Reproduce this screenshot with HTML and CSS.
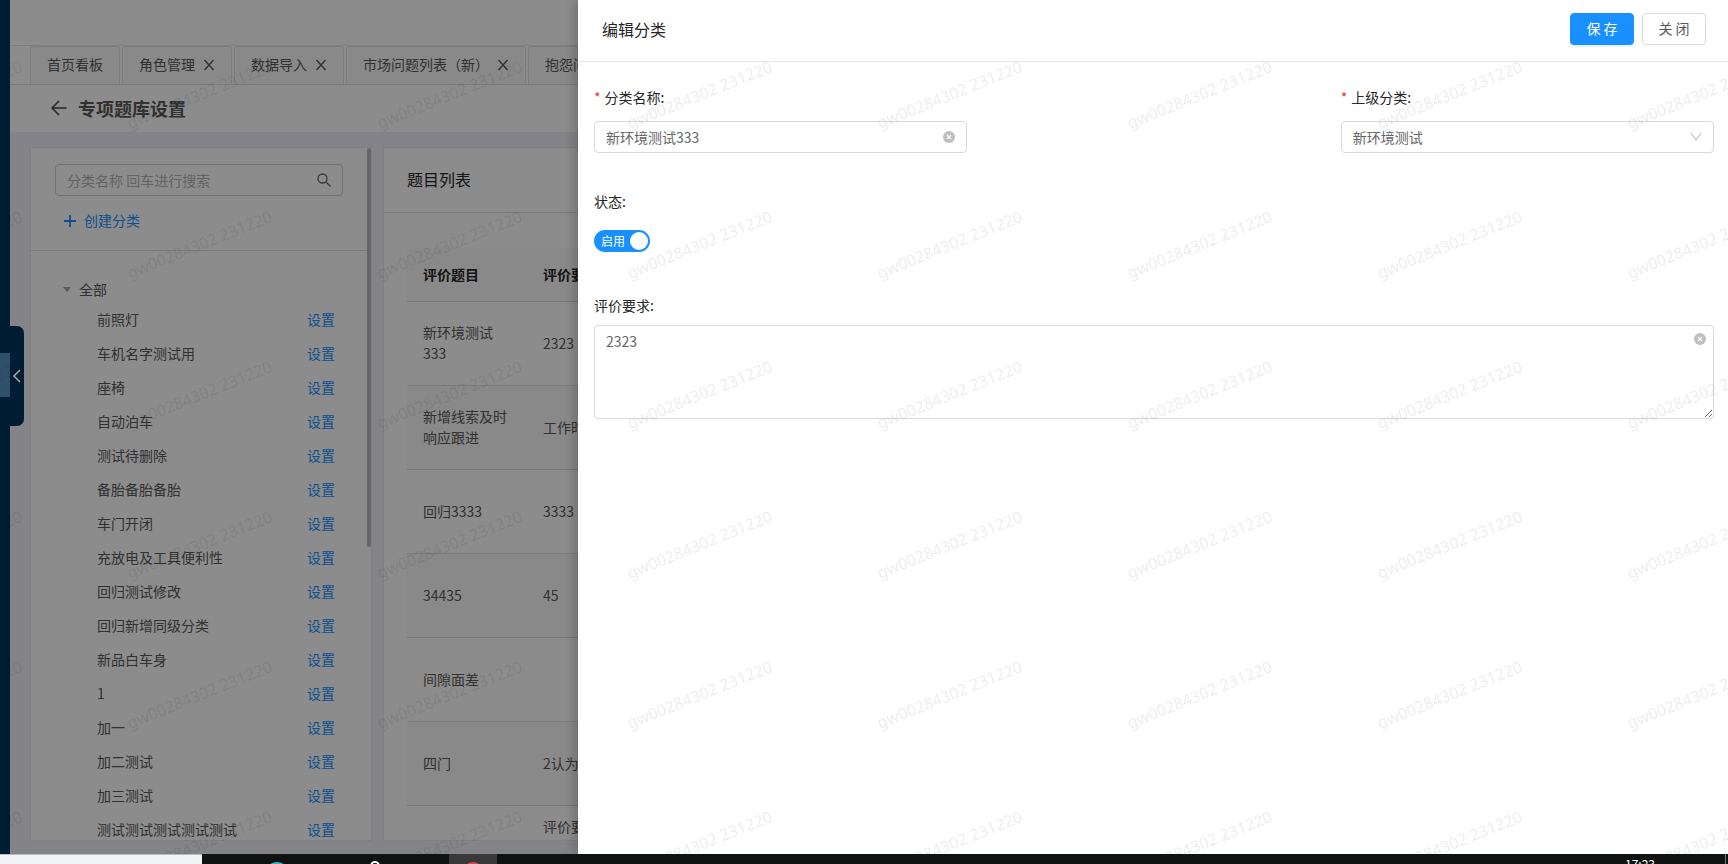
FILE: index.html
```html
<!DOCTYPE html>
<html lang="zh-CN">
<head>
<meta charset="utf-8">
<title>专项题库设置</title>
<link rel="stylesheet" href="styles.css">
</head>
<body>
<div class="app">
  <aside class="sider">
    <div class="sider-active"></div>
    <button class="sider-toggle" type="button" aria-label="展开菜单">
      <svg width="10" height="14" viewBox="0 0 10 14"><path d="M8 1 2 7l6 6"/></svg>
    </button>
  </aside>

  <main class="main">
    <div class="topbar"></div>
    <nav class="tabs">
      <a class="tab" href="#">首页看板</a>
      <a class="tab" href="#">角色管理<svg class="tab-close" viewBox="0 0 12 12"><path d="M1.500 1l9 10M10.500 1l-9 10"/></svg></a>
      <a class="tab" href="#">数据导入<svg class="tab-close" viewBox="0 0 12 12"><path d="M1.500 1l9 10M10.500 1l-9 10"/></svg></a>
      <a class="tab" href="#">市场问题列表（新）<svg class="tab-close" viewBox="0 0 12 12"><path d="M1.500 1l9 10M10.500 1l-9 10"/></svg></a>
      <a class="tab" href="#">抱怨问题<svg class="tab-close" viewBox="0 0 12 12"><path d="M1.500 1l9 10M10.500 1l-9 10"/></svg></a>
    </nav>
    <header class="page-head">
      <svg class="back" viewBox="0 0 16 16"><path d="M15.500 8H1M8 1 1 8l7 7"/></svg>
      <h1>专项题库设置</h1>
    </header>

    <div class="content">
      <section class="panel category">
        <div class="category-tools">
          <div class="search">
            <input type="text" placeholder="分类名称 回车进行搜索" aria-label="分类名称">
            <svg viewBox="0 0 14 14"><circle cx="5.500" cy="5.500" r="4.500"/><path d="M9 9l4.500 4.500"/></svg>
          </div>
          <button class="create" type="button">
            <svg viewBox="0 0 12 12"><path d="M6 0v12M0 6h12"/></svg>创建分类
          </button>
        </div>
        <div class="tree">
          <div class="tree-root"><span class="caret"></span>全部</div>
          <ul>
            <li>前照灯<a href="#">设置</a></li>
            <li>车机名字测试用<a href="#">设置</a></li>
            <li>座椅<a href="#">设置</a></li>
            <li>自动泊车<a href="#">设置</a></li>
            <li>测试待删除<a href="#">设置</a></li>
            <li>备胎备胎备胎<a href="#">设置</a></li>
            <li>车门开闭<a href="#">设置</a></li>
            <li>充放电及工具便利性<a href="#">设置</a></li>
            <li>回归测试修改<a href="#">设置</a></li>
            <li>回归新增同级分类<a href="#">设置</a></li>
            <li>新品白车身<a href="#">设置</a></li>
            <li>1<a href="#">设置</a></li>
            <li>加一<a href="#">设置</a></li>
            <li>加二测试<a href="#">设置</a></li>
            <li>加三测试<a href="#">设置</a></li>
            <li>测试测试测试测试测试<a href="#">设置</a></li>
          </ul>
        </div>
        <div class="scroll-thumb"></div>
      </section>

      <section class="panel questions">
        <h2>题目列表</h2>
        <div class="table-wrap">
          <table>
            <colgroup><col class="col-title"><col></colgroup>
            <thead><tr><th>评价题目</th><th>评价要求</th></tr></thead>
            <tbody>
              <tr><td>新环境测试333</td><td>2323</td></tr>
              <tr><td>新增线索及时响应跟进</td><td>工作时间</td></tr>
              <tr><td>回归3333</td><td>3333</td></tr>
              <tr><td>34435</td><td>45</td></tr>
              <tr><td>间隙面差</td><td></td></tr>
              <tr><td>四门</td><td>2认为</td></tr>
              <tr><td></td><td class="top">评价要求</td></tr>
            </tbody>
          </table>
        </div>
      </section>
    </div>
  </main>

  <div class="mask"></div>

  <form class="drawer">
    <header class="drawer-head">
      <h2>编辑分类</h2>
      <button class="btn primary" type="button">保 存</button>
      <button class="btn" type="button">关 闭</button>
    </header>
    <div class="drawer-body">
      <div class="field">
        <label class="required" for="name">分类名称:</label>
        <div class="control">
          <input id="name" type="text" value="新环境测试333">
          <svg class="clear" viewBox="0 0 12 12"><circle cx="6" cy="6" r="6"/><path d="M4 4l4 4M8 4l-4 4"/></svg>
        </div>
      </div>
      <div class="field parent">
        <label class="required" for="parent">上级分类:</label>
        <div class="control">
          <select id="parent"><option>新环境测试</option></select>
          <svg class="arrow" viewBox="0 0 12 10"><path d="M1 1l5 7 5-7"/></svg>
        </div>
      </div>
      <div class="field wide">
        <label for="status">状态:</label>
        <div class="control toggle">
          <label class="switch"><input id="status" type="checkbox" role="switch" checked><span>启用</span></label>
        </div>
      </div>
      <div class="field wide">
        <label for="demand">评价要求:</label>
        <div class="control area">
          <textarea id="demand">2323</textarea>
          <svg class="clear" viewBox="0 0 12 12"><circle cx="6" cy="6" r="6"/><path d="M4 4l4 4M8 4l-4 4"/></svg>
        </div>
      </div>
    </div>
  </form>

  <svg class="watermark" aria-hidden="true">
    <defs>
      <pattern id="mark" x="120" y="0" width="250" height="150" patternUnits="userSpaceOnUse">
        <text x="10" y="129" transform="rotate(-22 10 129)">gw00284302 231220</text>
      </pattern>
    </defs>
    <rect width="100%" height="100%" fill="url(#mark)"/>
  </svg>
</div>

<footer class="taskbar">
  <div class="task-search"></div>
  <div class="task-item"><svg width="26" height="10"><circle cx="13" cy="20" r="12" fill="#35b8cf"/></svg></div>
  <div class="task-item"><svg width="26" height="10"><circle cx="13" cy="12" r="4" fill="none" stroke="#fff" stroke-width="2"/></svg></div>
  <div class="task-item current"><svg width="26" height="10"><circle cx="13" cy="18" r="10" fill="#d3493d"/></svg></div>
  <time class="clock">17:23</time>
</footer>
</body>
</html>
```

FILE: styles.css
```css
* { box-sizing: border-box; }

body {
  margin: 0;
  height: 100vh;
  display: flex;
  flex-direction: column;
  overflow: hidden;
  font: 14px/21px "Noto Sans CJK SC", sans-serif;
  color: #595959;
}

h1, h2, ul { margin: 0; padding: 0; font-weight: 400; }
ul { list-style: none; }
a { color: #1890ff; text-decoration: none; }
svg { fill: none; stroke: none; flex: none; }
button, input, select, textarea { font: inherit; color: inherit; }

.app {
  flex: 1;
  min-height: 0;
  display: flex;
  position: relative;
  overflow: hidden;
}

/* side menu */
.sider {
  width: 10px;
  flex: none;
  position: relative;
  z-index: 2;
  display: flex;
  align-items: center;
  background: #001d33;
}
.sider-active {
  width: 10px;
  height: 44px;
  margin-bottom: 104px;
  background: #304f6a;
}
.sider-toggle {
  position: absolute;
  left: 10px;
  top: 326px;
  width: 14px;
  height: 100px;
  padding: 0;
  border: 0;
  border-radius: 0 7px 7px 0;
  background: #001d33;
}
.sider-toggle svg { display: block; margin: 0 auto; stroke: #a3adb4; stroke-width: 1.5; }

/* page */
.main {
  flex: 1;
  min-width: 0;
  display: flex;
  flex-direction: column;
  background: #f0f1f7;
}
.topbar { height: 46px; flex: none; background: #fff; border-bottom: 1px solid #e6e6e6; }
.tabs {
  flex: none;
  display: flex;
  gap: 2px;
  height: 39px;
  padding-left: 20px;
  background: #fff;
  border-bottom: 1px solid #dcdcdc;
}
.tab {
  display: flex;
  align-items: center;
  gap: 8px;
  padding: 0 16px 2px;
  color: #595959;
  white-space: nowrap;
  background: #fafafc;
  border: 1px solid #e4e4e4;
  border-bottom: 0;
  border-radius: 4px 4px 0 0;
}
.tab-close { width: 12px; height: 12px; stroke: #555; stroke-width: 1.3; }
.page-head {
  flex: none;
  display: flex;
  align-items: center;
  gap: 11px;
  height: 47px;
  padding: 0 0 2px 41px;
  background: #fff;
}
.page-head h1 { font-size: 18px; line-height: 28px; font-weight: 700; color: #595959; }
.back { width: 16px; height: 16px; stroke: #444; stroke-width: 1.5; }

.content {
  flex: 1;
  min-height: 0;
  display: flex;
  gap: 11px;
  padding: 15px 20px 13px;
}
.panel { background: #fff; border: 1px solid #e8e8e8; overflow: hidden; }

/* category tree */
.category { width: 342px; flex: none; position: relative; }
.category-tools {
  height: 103px;
  padding: 16px 28px 0 24px;
  border-bottom: 1px solid #dcdcdc;
}
.search { position: relative; }
.search input {
  display: block;
  width: 100%;
  height: 32px;
  padding: 0 32px 0 11px;
  border: 1px solid #d0d0d0;
  border-radius: 4px;
  background: none;
}
.search input::placeholder { color: #b5b5b5; opacity: 1; }
.search svg {
  position: absolute;
  right: 12px;
  top: 9px;
  width: 14px;
  height: 14px;
  stroke: #666;
  stroke-width: 1.3;
}
.create {
  display: flex;
  align-items: center;
  gap: 8px;
  margin-top: 14px;
  padding: 0 9px;
  border: 0;
  background: none;
  color: #1890ff;
}
.create svg { width: 12px; height: 12px; stroke: #1890ff; stroke-width: 1.8; }
.tree { padding: 26px 36px 0 32px; }
.tree-root { display: flex; align-items: center; gap: 8px; height: 25px; }
.caret { border: 4px solid transparent; border-top: 5px solid #a6a6a6; border-bottom: 0; }
.tree li {
  display: flex;
  justify-content: space-between;
  align-items: center;
  height: 34px;
  padding-left: 34px;
}
.scroll-thumb {
  position: absolute;
  top: 0;
  right: 0;
  width: 4px;
  height: 399px;
  border-radius: 2px;
  background: #bbb;
}

/* question table */
.questions { flex: 1; min-width: 0; }
.questions h2 {
  height: 65px;
  padding-left: 23px;
  font-size: 16px;
  line-height: 62px;
  color: #262626;
  border-bottom: 1px solid #dcdcdc;
}
.table-wrap { padding: 35px 23px 0; }
table { width: 100%; table-layout: fixed; border-collapse: collapse; }
.col-title { width: 120px; }
th, td { padding: 10px 16px; text-align: left; border-bottom: 1px solid #dcdcdc; }
th { height: 53px; font-weight: 700; color: #262626; background: #fafafc; }
td { height: 84px; }
td.top { vertical-align: top; }
tbody tr:nth-child(even) { background: #fafafc; }

.mask { position: absolute; inset: 0; background: rgba(0, 0, 0, .45); }

/* drawer */
.drawer {
  position: absolute;
  top: 0;
  right: 0;
  bottom: 0;
  width: 1150px;
  max-width: 100%;
  background: #fff;
  box-shadow: -4px 0 10px rgba(0, 0, 0, .2);
}
.drawer-head {
  display: flex;
  align-items: center;
  gap: 8px;
  height: 62px;
  padding: 0 22px 4px 24px;
  border-bottom: 1px solid #e5e8e8;
}
.drawer-head h2 { flex: 1; font-size: 16px; line-height: 24px; color: #262626; }
.btn {
  width: 64px;
  height: 32px;
  padding: 0;
  border: 1px solid #d9d9d9;
  border-radius: 4px;
  background: #fff;
}
.btn.primary {
  color: #fff;
  border-color: #1890ff;
  background: #1890ff;
  box-shadow: 0 2px 0 rgba(24, 144, 255, .1);
}
.drawer-body {
  display: grid;
  grid-template-columns: repeat(3, 1fr);
  row-gap: 32px;
  padding: 19px 14px 0 16px;
}
.field > label { display: block; height: 32px; line-height: 32px; color: #262626; }
.field .control { margin-top: 8px; }
.required::before { content: "*"; margin-right: 4px; color: #d9363e; }
.parent { grid-column: 3; }
.wide { grid-column: 1 / -1; }
.control { position: relative; min-height: 32px; }
.control input[type="text"], .control select, .control textarea {
  display: block;
  width: 100%;
  height: 32px;
  padding: 0 11px;
  border: 1px solid #d9d9d9;
  border-radius: 4px;
  background: #fff;
  color: #666;
}
.control select { appearance: none; }
.control textarea { height: 94px; padding: 5px 11px; resize: vertical; }
.field .area { margin-top: 4px; }
.clear { position: absolute; right: 12px; top: 10px; width: 12px; height: 12px; }
.clear circle { fill: #bfbfbf; }
.clear path { stroke: #fff; stroke-width: 1.2; }
.area .clear { right: 8px; top: 8px; }
.arrow { position: absolute; right: 12px; top: 11px; width: 12px; height: 10px; stroke: #bfbfbf; stroke-width: 1.2; }

.toggle { display: flex; align-items: center; }
.switch {
  display: flex;
  position: relative;
  width: 56px;
  height: 22px;
  border-radius: 11px;
  background: #1890ff;
  color: #fff;
  font-size: 12px;
  line-height: 22px;
}
.switch input {
  position: absolute;
  right: 2px;
  top: 2px;
  width: 18px;
  height: 18px;
  margin: 0;
  appearance: none;
  border-radius: 9px;
  background: #fff;
}
.switch span { padding-left: 7px; }

.watermark { position: absolute; inset: 0; width: 100%; height: 100%; z-index: 3; pointer-events: none; }
.watermark text { font: 16px "Noto Sans", sans-serif; fill: rgba(0, 0, 0, .07); }

/* system task bar */
.taskbar {
  flex: none;
  display: flex;
  height: 10px;
  overflow: hidden;
  background: #101211;
}
.task-search { width: 202px; margin-right: 51px; background: #f2f4f5; border-top: 1px solid #bbb; }
.task-item { display: flex; justify-content: center; width: 48px; margin-right: 50px; }
.current { background: #383838; margin-right: 0; }
.clock {
  margin-left: auto;
  margin-right: 2px;
  padding-right: 70px;
  border-right: 1px solid #777;
  color: #fff;
  font-size: 12px;
  line-height: 20px;
}
```
